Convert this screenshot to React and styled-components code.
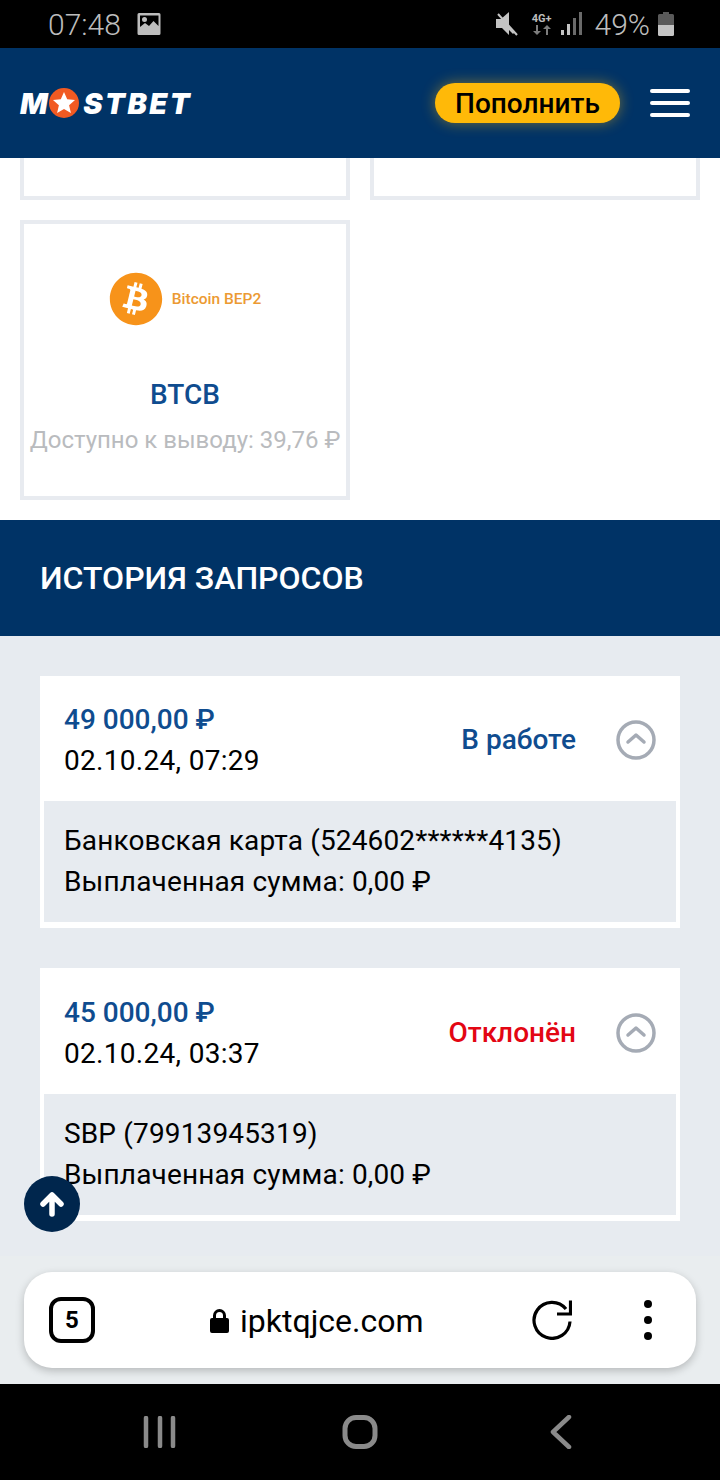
import React from 'react'
import styled, { createGlobalStyle } from 'styled-components'
import { FaBitcoin } from 'react-icons/fa'

const GlobalStyle = createGlobalStyle`
  html, body {
    margin: 0;
    padding: 0;
    background: #fff;
    font-family: Roboto, "Noto Sans", sans-serif;
  }
`

const Page = styled.div`
  position: relative;
  width: 720px;
  height: 1480px;
  overflow: hidden;
  display: flex;
  flex-direction: column;
`

const StatusBar = styled.div`
  height: 48px;
  background: #000;
  color: #bdbdbd;
  display: flex;
  align-items: center;
  justify-content: space-between;
  padding: 0 46px 0 48px;
`
const StatusGroup = styled.div`
  display: flex;
  align-items: center;
`
const Clock = styled.span`
  font-size: 30px;
  font-weight: 300;
  margin-right: 16px;
`
const Percent = styled.span`
  font-size: 30px;
  font-weight: 300;
  margin: 0 8px 0 12px;
`
const NetBadge = styled.div`
  width: 24px;
  margin: 0 7px 0 11px;
  display: flex;
  flex-direction: column;
  align-items: center;
  font-size: 11px;
  font-weight: 700;
  line-height: 12px;
`

const Header = styled.header`
  height: 110px;
  background: #003366;
  display: flex;
  align-items: center;
  padding: 0 30px 0 20px;
`
const Logo = styled.div`
  display: flex;
  align-items: center;
  color: #fff;
  font-family: Inter, Roboto, sans-serif;
  font-size: 29px;
  font-weight: 900;
  font-style: italic;
  letter-spacing: 2.5px;
  margin-right: auto;
`
const LogoStar = styled.svg`
  width: 30px;
  height: 30px;
  margin: 0 4px 0 -1px;
`
const TopUp = styled.button`
  width: 185px;
  height: 40px;
  border: 0;
  border-radius: 20px;
  background: #ffb908;
  box-shadow: 0 0 14px rgba(255, 185, 8, 0.45);
  color: #000;
  font-family: inherit;
  font-size: 28px;
  font-weight: 500;
  padding: 0;
  margin-right: 30px;
`
const Burger = styled.div`
  width: 40px;
  display: flex;
  flex-direction: column;
  gap: 8px;
`
const BurgerBar = styled.span`
  height: 4px;
  border-radius: 2px;
  background: #fff;
`

const Methods = styled.section`
  background: #fff;
  display: grid;
  grid-template-columns: 330px 330px;
  gap: 20px;
  padding: 0 20px 20px;
`
const MethodCard = styled.div`
  box-sizing: border-box;
  border: 4px solid #e8ebf0;
  ${(p) => p.$cut && 'border-top: 0; height: 42px;'}
  ${(p) => !p.$cut && 'height: 280px;'}
  display: flex;
  flex-direction: column;
  align-items: center;
`
const CoinLogo = styled.div`
  display: flex;
  align-items: center;
  gap: 9px;
  margin-top: 48px;
  color: #f7931a;
  font-size: 15.5px;
  font-weight: 500;
`
const CoinText = styled.span`
  color: #ec9a32;
`
const MethodName = styled.div`
  margin-top: 51px;
  color: #0f4c8f;
  font-size: 28px;
  font-weight: 500;
  line-height: 36px;
`
const MethodLimit = styled.div`
  margin-top: 9px;
  color: #b9bbbe;
  font-size: 24px;
  line-height: 36px;
  white-space: nowrap;
`

const SectionTitle = styled.h2`
  margin: 0;
  height: 116px;
  box-sizing: border-box;
  background: #003366;
  color: #fff;
  font-size: 32px;
  font-weight: 500;
  line-height: 116px;
  padding-left: 40px;
  text-transform: uppercase;
`

const History = styled.section`
  height: 620px;
  box-sizing: border-box;
  background: #e7ebf0;
  padding: 40px 40px 0;
  display: flex;
  flex-direction: column;
  gap: 40px;
`
const Request = styled.article`
  background: #fff;
  padding: 0 4px 6px;
`
const RequestHead = styled.div`
  display: flex;
  align-items: center;
  padding: 23.25px 20px 20px;
`
const RequestInfo = styled.div`
  margin-right: auto;
`
const Amount = styled.div`
  color: #0f4c8f;
  font-size: 28px;
  font-weight: 500;
  line-height: 41px;
`
const Line = styled.div`
  color: #000;
  font-size: 28px;
  line-height: 41px;
  letter-spacing: ${(p) => (p.$wide ? '0.3px' : '0.15px')};
`
const Status = styled.div`
  color: ${(p) => (p.$declined ? '#e30613' : '#0f4c8f')};
  font-size: 28px;
  font-weight: 500;
  margin: -1px 40px 0 0;
`
const RequestBody = styled.div`
  background: #e7ebf0;
  padding: 19px 20px 20px;
`
const ChevronCircle = styled.svg`
  width: 40px;
  height: 40px;
`

const ToTop = styled.button`
  position: absolute;
  left: 24px;
  top: 1176px;
  width: 56px;
  height: 56px;
  border: 0;
  border-radius: 50%;
  background: #00264d;
  display: flex;
  align-items: center;
  justify-content: center;
  padding: 0;
`

const BrowserBar = styled.div`
  height: 128px;
  box-sizing: border-box;
  background: #e9edef;
  padding: 16px 24px;
`
const BrowserPill = styled.div`
  height: 96px;
  border-radius: 28px;
  background: #fff;
  box-shadow: 0 3px 8px rgba(0, 0, 0, 0.22);
  display: flex;
  align-items: center;
  padding: 0 44px 0 25px;
`
const TabCount = styled.div`
  box-sizing: border-box;
  width: 46px;
  height: 46px;
  border: 4px solid #000;
  border-radius: 12px;
  display: flex;
  align-items: center;
  justify-content: center;
  color: #000;
  font-size: 24px;
  font-weight: 700;
`
const Address = styled.div`
  display: flex;
  align-items: center;
  gap: 12px;
  margin-left: 115px;
  margin-right: auto;
  padding-top: 1px;
  color: #000;
  font-size: 32px;
`
const AddressText = styled.span`
  margin-left: -1px;
`
const BrowserIcon = styled.svg`
  display: block;
`
const Dots = styled.div`
  display: flex;
  flex-direction: column;
  gap: 8px;
  margin-left: 72px;
`
const Dot = styled.span`
  width: 8px;
  height: 8px;
  border-radius: 50%;
  background: #000;
`

const NavBar = styled.nav`
  flex: 1;
  background: #000;
  display: flex;
  align-items: center;
  gap: 160px;
  padding-left: 140px;
`

const ImageIcon = () => (
  <svg width="24" height="24" viewBox="0 0 24 24">
    <path
      fill="#bdbdbd"
      fillRule="evenodd"
      d="M2 1h20a1.5 1.5 0 0 1 1.5 1.5v19A1.5 1.5 0 0 1 22 23H2a1.5 1.5 0 0 1-1.5-1.5v-19A1.5 1.5 0 0 1 2 1zM3 3.500V15l5-4 4 3 4.500-5 5 5V3.500zM7.500 5a2.500 2.500 0 1 1 0 5 2.500 2.500 0 0 1 0-5z"
    />
  </svg>
)

const MuteIcon = () => (
  <svg width="24" height="26" viewBox="0 0 24 26">
    <path fill="#c4c4c4" d="M1 8h5l8-7v13.500L20 21l-2 2-4-4v5l-7-7H1z" />
    <path stroke="#c4c4c4" strokeWidth="2" d="M3 3l19 21" />
  </svg>
)

const NetArrows = () => (
  <svg width="18" height="10" viewBox="0 0 18 10">
    <path fill="#7d7d7d" d="M3 0h2v6h3L4 10 0 6h3zM13 10h2V4h3l-4-4-4 4h3z" />
  </svg>
)

const SignalIcon = () => (
  <svg width="22" height="24" viewBox="0 0 22 24">
    <rect x="0" y="18" width="3" height="5" fill="#c4c4c4" />
    <rect x="6" y="12" width="3" height="11" fill="#c4c4c4" />
    <rect x="12" y="6" width="3" height="17" fill="#6a6a6a" />
    <rect x="18" y="0" width="3" height="23" fill="#6a6a6a" />
  </svg>
)

const BatteryIcon = () => (
  <svg width="16" height="24" viewBox="0 0 16 24">
    <path fill="#5a5a5a" d="M5 0h6v2h3.500A1.500 1.500 0 0 1 16 3.500V13H0V3.500A1.500 1.500 0 0 1 1.500 2H5z" />
    <path fill="#c4c4c4" d="M0 13h16v9.500a1.500 1.500 0 0 1-1.500 1.500h-13A1.500 1.500 0 0 1 0 22.500z" />
  </svg>
)

const Chevron = () => (
  <ChevronCircle viewBox="0 0 40 40">
    <circle cx="20" cy="20" r="18" fill="none" stroke="#a5abb5" strokeWidth="3.500" />
    <path d="M12 22l8-7 8 7" fill="none" stroke="#a5abb5" strokeWidth="3.500" strokeLinecap="round" strokeLinejoin="round" />
  </ChevronCircle>
)

const requests = [
  { amount: '49 000,00 ₽', date: '02.10.24, 07:29', status: 'В работе', method: 'Банковская карта (524602******4135)' },
  { amount: '45 000,00 ₽', date: '02.10.24, 03:37', status: 'Отклонён', declined: true, method: 'SBP (79913945319)' },
]

const App = () => {
  return (
    <Page>
      <GlobalStyle />
      <StatusBar>
        <StatusGroup>
          <Clock>07:48</Clock>
          <ImageIcon />
        </StatusGroup>
        <StatusGroup>
          <MuteIcon />
          <NetBadge>
            4G+
            <NetArrows />
          </NetBadge>
          <SignalIcon />
          <Percent>49%</Percent>
          <BatteryIcon />
        </StatusGroup>
      </StatusBar>

      <Header>
        <Logo>
          M
          <LogoStar viewBox="0 0 30 30">
            <circle cx="15" cy="15" r="15" fill="#f15a22" />
            <path fill="#fff" d="M15 4l3.200 7.300 7.800.7-5.900 5.200 1.800 7.800-6.900-4.100L8.100 25l1.800-7.800L4 12l7.800-.7z" />
          </LogoStar>
          STBET
        </Logo>
        <TopUp>Пополнить</TopUp>
        <Burger>
          <BurgerBar />
          <BurgerBar />
          <BurgerBar />
        </Burger>
      </Header>

      <Methods>
        <MethodCard $cut />
        <MethodCard $cut />
        <MethodCard>
          <CoinLogo>
            <FaBitcoin size={54} />
            <CoinText>Bitcoin BEP2</CoinText>
          </CoinLogo>
          <MethodName>BTCB</MethodName>
          <MethodLimit>Доступно к выводу: 39,76 ₽</MethodLimit>
        </MethodCard>
      </Methods>

      <SectionTitle>История запросов</SectionTitle>

      <History>
        {requests.map((r) => (
          <Request key={r.date}>
            <RequestHead>
              <RequestInfo>
                <Amount>{r.amount}</Amount>
                <Line $wide>{r.date}</Line>
              </RequestInfo>
              <Status $declined={r.declined}>{r.status}</Status>
              <Chevron />
            </RequestHead>
            <RequestBody>
              <Line>{r.method}</Line>
              <Line>Выплаченная сумма: 0,00 ₽</Line>
            </RequestBody>
          </Request>
        ))}
      </History>

      <ToTop>
        <svg width="26" height="26" viewBox="0 0 26 26">
          <path d="M13 23V5M4 13l9-9 9 9" fill="none" stroke="#fff" strokeWidth="5.500" strokeLinecap="round" strokeLinejoin="round" />
        </svg>
      </ToTop>

      <BrowserBar>
        <BrowserPill>
          <TabCount>5</TabCount>
          <Address>
            <BrowserIcon width="19" height="24" viewBox="0 0 19 24">
              <path
                fill="#000"
                d="M3 9V6.500a6.500 6.500 0 0 1 13 0V9h1a2 2 0 0 1 2 2v11a2 2 0 0 1-2 2H2a2 2 0 0 1-2-2V11a2 2 0 0 1 2-2zm3 0h7V6.500a3.500 3.500 0 0 0-7 0z"
              />
            </BrowserIcon>
            <AddressText>ipktqjce.com</AddressText>
          </Address>
          <BrowserIcon width="40" height="40" viewBox="0 0 40 40">
            <path d="M38 21.500A18 18 0 1 1 34 9" fill="none" stroke="#000" strokeWidth="3.200" />
            <path d="M38.500 0.500V14H25" fill="none" stroke="#000" strokeWidth="3.200" />
          </BrowserIcon>
          <Dots>
            <Dot />
            <Dot />
            <Dot />
          </Dots>
        </BrowserPill>
      </BrowserBar>

      <NavBar>
        <BrowserIcon width="40" height="32" viewBox="0 0 40 32">
          <path stroke="#8a8a8a" strokeWidth="4.500" strokeLinecap="round" d="M6 2v28M20 2v28M33 2v28" />
        </BrowserIcon>
        <BrowserIcon width="40" height="34" viewBox="0 0 40 34">
          <rect x="5" y="2.500" width="30" height="29" rx="11" fill="none" stroke="#8a8a8a" strokeWidth="5" />
        </BrowserIcon>
        <BrowserIcon width="40" height="34" viewBox="0 0 40 34">
          <path d="M29 2L13 17l16 15" fill="none" stroke="#8a8a8a" strokeWidth="4.500" strokeLinecap="round" strokeLinejoin="round" />
        </BrowserIcon>
      </NavBar>
    </Page>
  )
}

export default App
